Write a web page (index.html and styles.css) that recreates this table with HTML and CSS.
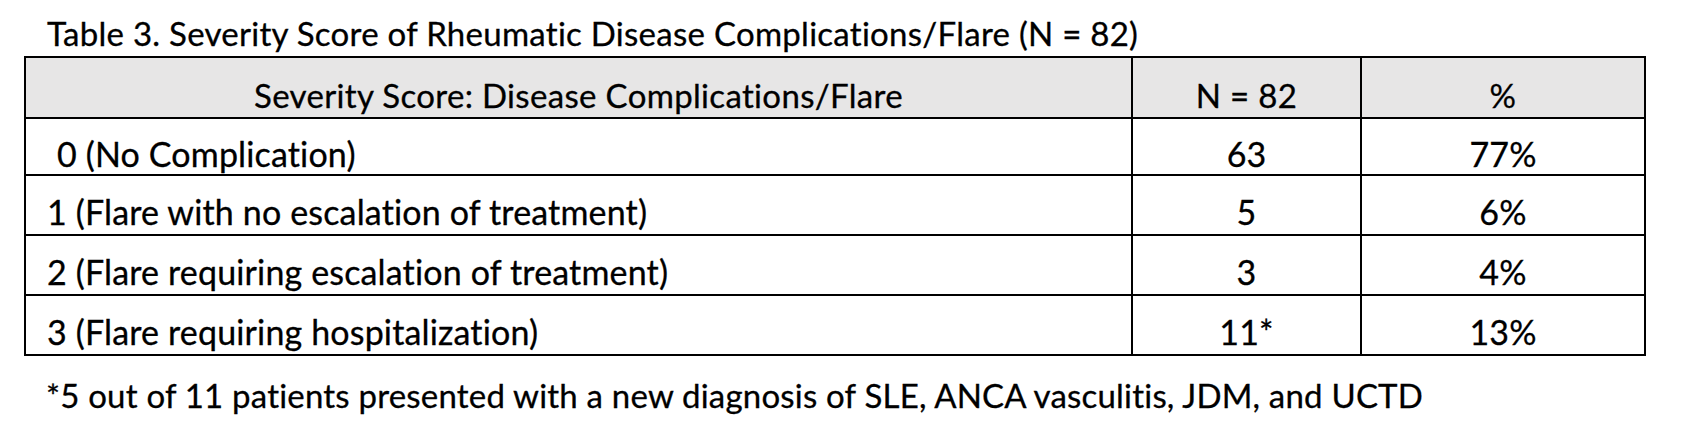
FILE: index.html
```html
<!DOCTYPE html>
<html lang="en">
<head>
<meta charset="utf-8">
<title>Table 3</title>
<link rel="stylesheet" href="styles.css">
</head>
<body>
<div class="page">
  <div class="caption">Table 3. Severity Score of Rheumatic Disease Complications/Flare (N = 82)</div>
  <table class="data">
    <colgroup>
      <col class="c-label">
      <col class="c-n">
      <col class="c-pct">
    </colgroup>
    <thead>
      <tr class="head-row">
        <th>Severity Score: Disease Complications/Flare</th>
        <th>N = 82</th>
        <th>%</th>
      </tr>
    </thead>
    <tbody>
      <tr class="first-row"><td class="label indent">0 (No Complication)</td><td>63</td><td>77%</td></tr>
      <tr><td class="label">1 (Flare with no escalation of treatment)</td><td>5</td><td>6%</td></tr>
      <tr><td class="label">2 (Flare requiring escalation of treatment)</td><td>3</td><td>4%</td></tr>
      <tr><td class="label">3 (Flare requiring hospitalization)</td><td>11*</td><td>13%</td></tr>
    </tbody>
  </table>
  <div class="note">*5 out of 11 patients presented with a new diagnosis of SLE, ANCA vasculitis, JDM, and UCTD</div>
</div>
</body>
</html>
```
FILE: styles.css
```css
html, body {
  margin: 0;
  padding: 0;
  background: #ffffff;
}

body {
  font-family: "Lato", "Open Sans", "Liberation Sans", sans-serif;
  color: #000000;
  font-variant-ligatures: none;
  font-feature-settings: "liga" 0, "clig" 0;
  -webkit-text-stroke: 0.3px #000;
}

.page {
  padding: 13px 0 0 24px;
}

.caption {
  font-size: 33px;
  letter-spacing: 0.27px;
  line-height: 40px;
  height: 43px;
  padding-left: 23px;
  white-space: nowrap;
}

.data {
  border-collapse: collapse;
  table-layout: fixed;
  width: 1620px;
  font-size: 34px;
  border: 2px solid #000;
}

.c-label { width: 1107px; }
.c-n { width: 229px; }
.c-pct { width: 284px; }

.data th,
.data td {
  border: 2px solid #000;
  padding: 14px 0 0 0;
  height: 44px;
  text-align: center;
  vertical-align: middle;
  font-weight: normal;
  white-space: nowrap;
  line-height: 36px;
  letter-spacing: 0.15px;
}

.data .head-row th {
  background: #e7e6e6;
  font-size: 33px;
  letter-spacing: 0.33px;
  height: 45px;
}

.data .first-row td {
  height: 41px;
}

.data td.label {
  text-align: left;
  padding-left: 21px;
}

.data td.indent {
  padding-left: 31px;
}

.note {
  font-size: 33px;
  letter-spacing: 0.2px;
  line-height: 40px;
  padding: 19px 0 0 22px;
  white-space: nowrap;
}
```
